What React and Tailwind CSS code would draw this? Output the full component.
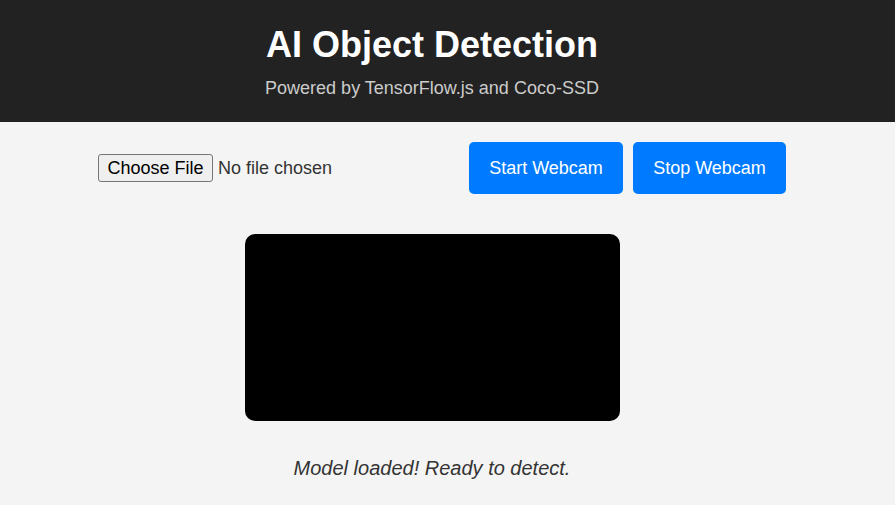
import React from "react";

function App() {
  return (
    <div className="min-h-screen bg-[#f4f4f4] font-['Liberation_Sans',Arial,sans-serif] text-[#333]">
      {/* Header */}
      <header className="bg-[#222] text-white h-[122px] pt-[22px]">
        <div className="w-[864px] text-center">
          <h1 className="text-[36px] font-bold leading-[46px]">AI Object Detection</h1>
          <p className="text-[18px] text-[#ccc] mt-[9px] leading-[22px]">Powered by TensorFlow.js and Coco-SSD</p>
        </div>
      </header>

      {/* Controls */}
      <div className="flex items-center pt-[20px] pl-[98px]">
        <input
          type="file"
          className="text-[18px] w-[360px] file:h-[28px] file:px-[8.5px] file:mr-[5px] file:border file:border-[#767676] file:rounded-[3px] file:bg-[#efefef] file:text-black"
        />
        <div className="flex gap-[10px] ml-[11px]">
          <button className="h-[52px] w-[154px] bg-[#007bff] text-white text-[18px] rounded-[5px]">Start Webcam</button>
          <button className="h-[52px] w-[153px] bg-[#007bff] text-white text-[18px] rounded-[5px]">Stop Webcam</button>
        </div>
      </div>

      {/* Video area */}
      <div className="w-[864px] flex justify-center mt-[40px]">
        <div className="w-[375px] h-[187px] bg-black rounded-[10px]"></div>
      </div>

      <p className="w-[864px] text-center italic text-[20px] mt-[32px]">Model loaded! Ready to detect.</p>
    </div>
  );
}

export default App;
